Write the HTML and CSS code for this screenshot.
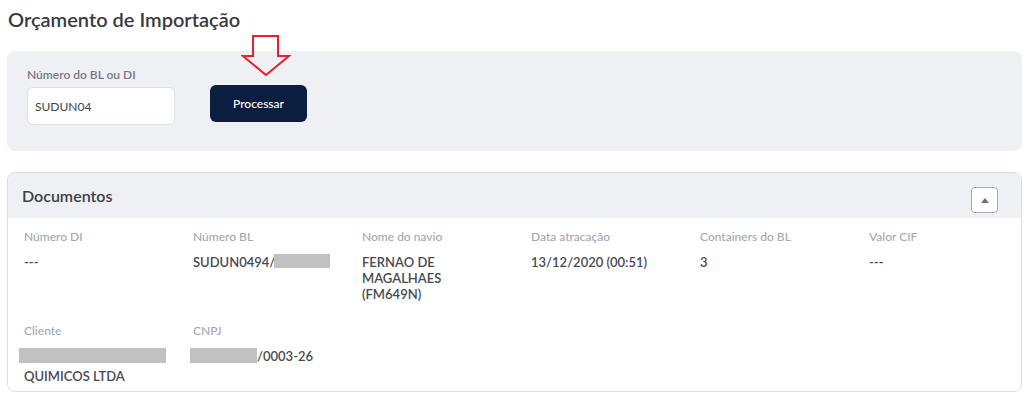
FILE: index.html
```html
<!DOCTYPE html>
<html lang="pt-BR">
<head>
  <meta charset="UTF-8">
  <title>Orçamento de Importação</title>
  <link rel="stylesheet" href="styles.css">
</head>
<body>
  <h1 class="page-title">Orçamento de Importação</h1>

  <section class="search-panel">
    <div class="field">
      <label for="bl">Número do BL ou DI</label>
      <input id="bl" type="text" value="SUDUN04">
    </div>
    <div class="action">
      <svg class="hint-arrow" width="52" height="42" viewBox="0 0 52 42">
        <path d="M12 1 H37 V21 H48 L25 40 L2 21 H12 Z" fill="none" stroke="#e6212b" stroke-width="2"/>
      </svg>
      <button class="btn-primary">Processar</button>
    </div>
  </section>

  <section class="card">
    <div class="card-header">
      <h2>Documentos</h2>
      <button class="collapse-btn" aria-label="Recolher">
        <svg width="8" height="5" viewBox="0 0 8 5"><path d="M0 5 L4 0 L8 5 Z" fill="#6b7280"/></svg>
      </button>
    </div>
    <div class="card-body">
      <div class="info-grid">
        <div class="info">
          <span class="info-label">Número DI</span>
          <span class="info-value">---</span>
        </div>
        <div class="info">
          <span class="info-label">Número BL</span>
          <span class="info-value">SUDUN0494/<span class="redact redact-bl"></span></span>
        </div>
        <div class="info">
          <span class="info-label">Nome do navio</span>
          <span class="info-value">FERNAO DE MAGALHAES (FM649N)</span>
        </div>
        <div class="info">
          <span class="info-label">Data atracação</span>
          <span class="info-value">13/12/2020 (00:51)</span>
        </div>
        <div class="info">
          <span class="info-label">Containers do BL</span>
          <span class="info-value">3</span>
        </div>
        <div class="info">
          <span class="info-label">Valor CIF</span>
          <span class="info-value">---</span>
        </div>
        <div class="info">
          <span class="info-label">Cliente</span>
          <span class="info-value"><span class="redact redact-client"></span>QUIMICOS LTDA</span>
        </div>
        <div class="info">
          <span class="info-label">CNPJ</span>
          <span class="info-value"><span class="redact redact-cnpj"></span>/0003-26</span>
        </div>
      </div>
    </div>
  </section>
</body>
</html>
```

FILE: styles.css
```css
* {
  box-sizing: border-box;
}
body {
  margin: 0;
  padding: 0 12px 0 7px;
  font-family: Lato, "Open Sans", sans-serif;
  color: #3b3f46;
  background: #fff;
}
.page-title {
  margin: 6px 0 0 1px;
  font-size: 20px;
  font-weight: 600;
  line-height: 26px;
  color: #383a3f;
}
.search-panel {
  display: flex;
  align-items: flex-end;
  gap: 35px;
  margin-top: 19px;
  height: 100px;
  padding: 20px 20px 26px;
  background: #eef0f4;
  border-radius: 8px;
}
.field {
  display: flex;
  flex-direction: column;
}
.field label {
  font-size: 12px;
  font-weight: 600;
  color: #737985;
  margin-bottom: 5px;
}
.field input {
  width: 148px;
  height: 38px;
  padding: 0 7px;
  border: 1px solid #dde1e8;
  border-radius: 6px;
  font-family: inherit;
  font-size: 12px;
  color: #40444b;
  background: #fff;
}
.action {
  position: relative;
  padding-bottom: 3px;
}
.hint-arrow {
  position: absolute;
  left: 31px;
  top: -50px;
}
.btn-primary {
  width: 97px;
  height: 37px;
  border: 0;
  border-radius: 6px;
  background: #0b1e40;
  color: #fff;
  font-family: inherit;
  font-size: 12px;
  font-weight: 500;
}
.card {
  margin-top: 21px;
  border: 1px solid #d9dee7;
  border-radius: 8px;
  overflow: hidden;
}
.card-header {
  display: flex;
  align-items: center;
  justify-content: space-between;
  height: 45px;
  padding: 0 23px 0 14px;
  background: #eef0f4;
}
.card-header h2 {
  margin: 0;
  font-size: 16px;
  font-weight: 600;
  color: #3d4047;
}
.collapse-btn {
  display: flex;
  align-items: center;
  justify-content: center;
  width: 27px;
  height: 26px;
  margin-top: 9px;
  padding: 0;
  background: #fff;
  border: 1px solid #a7acb4;
  border-radius: 4px;
}
.card-body {
  padding: 11px 16px 7px;
}
.info-grid {
  display: grid;
  grid-template-columns: repeat(6, 169px);
  row-gap: 14px;
}
.info {
  display: flex;
  flex-direction: column;
  min-height: 80px;
  padding-right: 30px;
}
.info-label {
  font-size: 12px;
  font-weight: 500;
  color: #a3a8b1;
  line-height: 16px;
}
.info-value {
  margin-top: 9px;
  font-size: 13px;
  font-weight: 600;
  color: #464a52;
  line-height: 16px;
}
.redact {
  display: inline-block;
  background: #c1c1c1;
  vertical-align: top;
}
.redact-bl {
  width: 56px;
  height: 14px;
  margin-left: -1px;
}
.redact-client {
  display: block;
  width: 147px;
  height: 15px;
  margin-left: -5px;
  margin-bottom: 5px;
}
.redact-cnpj {
  width: 67px;
  height: 15px;
  margin-left: -3px;
}
.info:nth-child(n+7) {
  min-height: 0;
}
```
